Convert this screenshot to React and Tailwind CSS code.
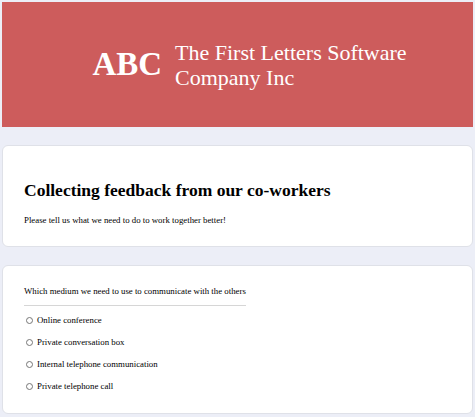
const options = [
  "Online conference",
  "Private conversation box",
  "Internal telephone communication",
  "Private telephone call",
];

export default function App() {
  return (
    <div className="min-h-[417px] bg-[#eceef7] px-[2px] pt-[2px] pb-[3px] font-['Liberation_Serif',serif] text-black">
      <header className="flex h-[125px] items-center justify-center gap-[13px] bg-[#cd5c5c] pl-[24px] text-white">
        <span className="text-[33px] font-bold leading-none">ABC</span>
        <h1 className="text-[22px] leading-[25px]">
          The First Letters Software
          <br />
          Company Inc
        </h1>
      </header>

      <section className="mt-[18px] rounded-md border border-[#dfe1e8] bg-white px-[21px] pt-[32px] pb-[18px]">
        <h2 className="text-[17.5px] font-bold leading-6">
          Collecting feedback from our co-workers
        </h2>
        <p className="mt-[12px] text-[8.8px] leading-[13.5px]">
          Please tell us what we need to do to work together better!
        </p>
      </section>

      <section className="mt-[18px] rounded-md border border-[#dfe1e8] bg-white px-[21px] pt-[19px] pb-[20px]">
        <div className="w-fit border-b border-[#d6d6d6] pb-[7px] text-[8.8px] leading-[13.5px]">
          Which medium we need to use to communicate with the others
        </div>
        <ul className="mt-[8px] flex flex-col gap-[9px]">
          {options.map((o) => (
            <li key={o} className="flex items-center gap-[4px] pl-[2px] text-[8.8px] leading-[13px]">
              <span className="h-[7px] w-[7px] rounded-full border border-[#767676]" />
              {o}
            </li>
          ))}
        </ul>
      </section>
    </div>
  );
}
